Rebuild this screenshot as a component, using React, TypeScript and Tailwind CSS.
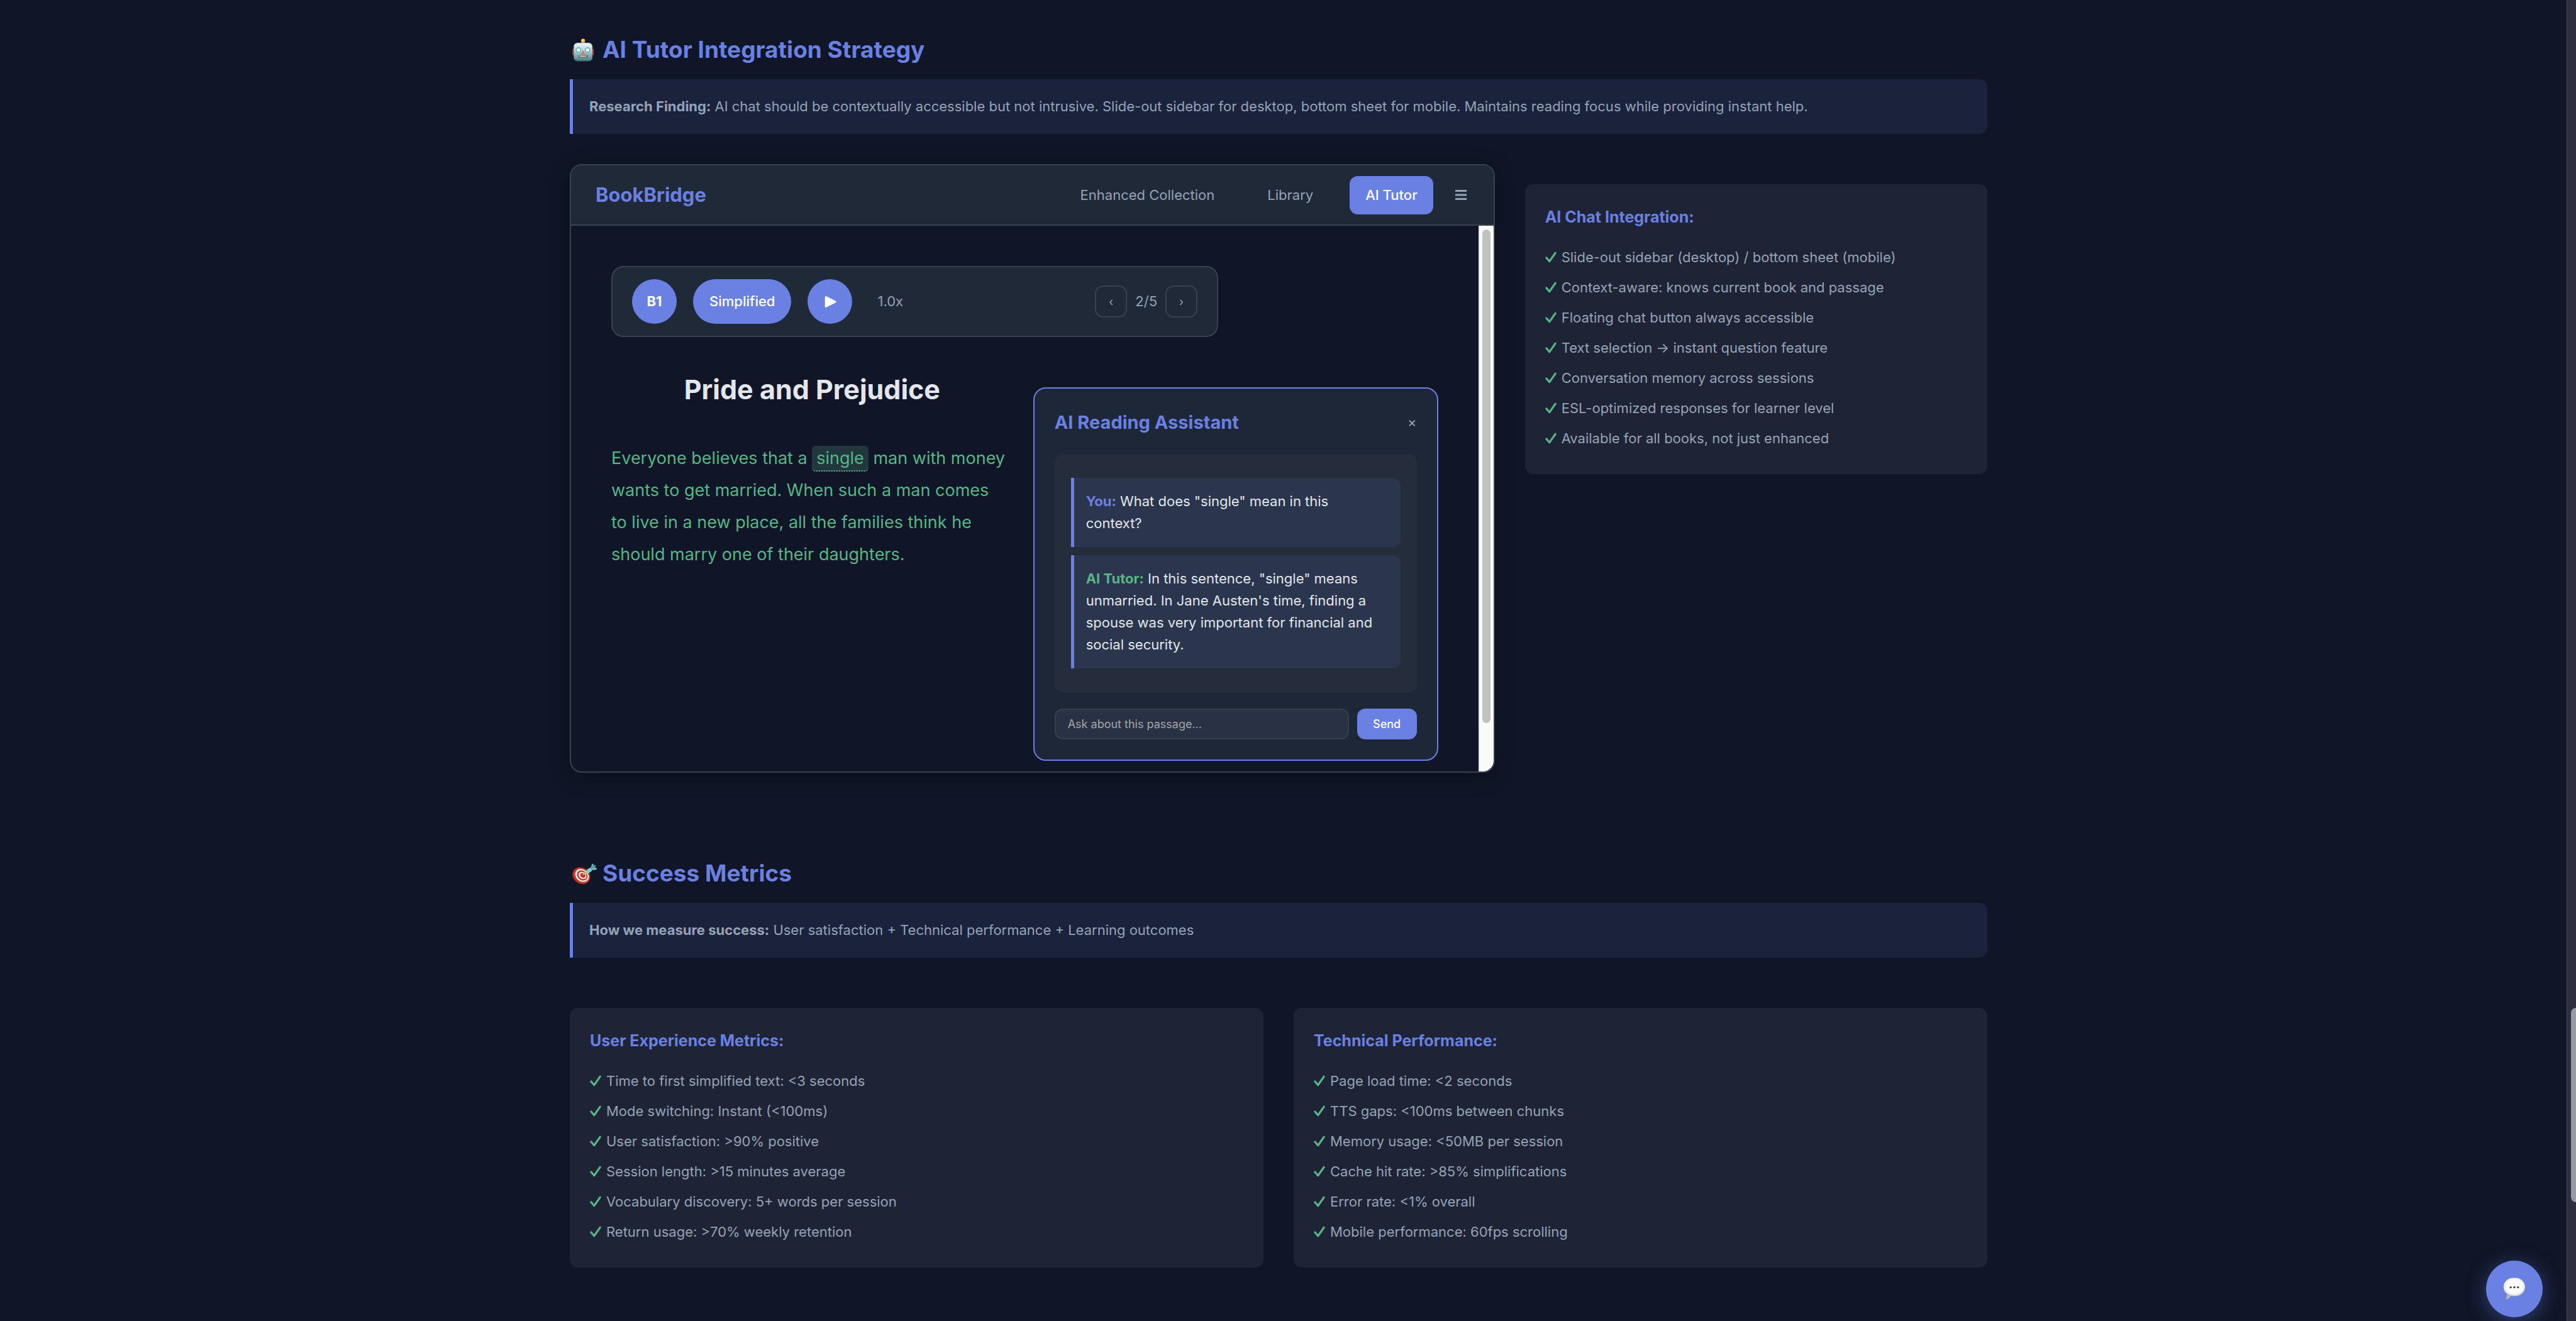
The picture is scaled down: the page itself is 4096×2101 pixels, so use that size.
import React from "react";

function RobotIcon() {
  return (
    <svg viewBox="33 40 130 138" className="h-[37px] w-[35px]" aria-hidden="true">
      <defs>
        <linearGradient id="robotFace" x1="0" y1="0" x2="0" y2="1">
          <stop offset="0" stopColor="#e9f5f3" />
          <stop offset="0.45" stopColor="#b9d3d3" />
          <stop offset="1" stopColor="#4f8089" />
        </linearGradient>
        <radialGradient id="robotBulb" cx="0.45" cy="0.4" r="0.6">
          <stop offset="0" stopColor="#ffe58a" />
          <stop offset="1" stopColor="#ee9a2e" />
        </radialGradient>
      </defs>
      <rect x="34" y="101" width="12" height="40" rx="5" fill="#b83a38" />
      <rect x="148" y="101" width="12" height="40" rx="5" fill="#b83a38" />
      <ellipse cx="96.500" cy="69" rx="15" ry="8" fill="#6a5280" />
      <circle cx="96.500" cy="54" r="12" fill="url(#robotBulb)" />
      <rect x="40" y="67" width="113" height="109" rx="22" fill="#3b6770" />
      <rect x="42" y="67" width="109" height="104" rx="21" fill="url(#robotFace)" />
      <circle cx="69" cy="109" r="16" fill="#4ba7cb" />
      <circle cx="69" cy="109" r="10.500" fill="#fff" />
      <circle cx="123" cy="109" r="16" fill="#4ba7cb" />
      <circle cx="123" cy="109" r="10.500" fill="#fff" />
      <path d="M96.500 109 L107 132 H86 Z" fill="#df6a5d" />
      <rect x="71" y="139" width="51" height="15" rx="5" fill="#3d3b3c" />
      <path d="M76 141h7v10h-7zM87 141h7v11h-7zM98 141h7v11h-7zM109 141h7v10h-7z" fill="#f6f1e4" />
    </svg>
  );
}

function TargetIcon() {
  return (
    <svg viewBox="22 34 148 128" className="h-[35px] w-[40px]" aria-hidden="true">
      <g transform="rotate(38 76 110)">
        <ellipse cx="74" cy="113" rx="54" ry="46" fill="#86201c" />
        <ellipse cx="76" cy="109" rx="54" ry="45" fill="#c2352c" />
        <ellipse cx="78" cy="107" rx="43" ry="35" fill="#f7efec" />
        <ellipse cx="79" cy="106" rx="34" ry="27" fill="#c2352c" />
        <ellipse cx="80" cy="105" rx="25" ry="20" fill="#f7efec" />
        <ellipse cx="81" cy="104" rx="16" ry="13" fill="#c2352c" />
      </g>
      <path d="M83 104 L104 88" stroke="#e3b53c" strokeWidth="6" strokeLinecap="round" />
      <path d="M96 86 L104 98" stroke="#e3b53c" strokeWidth="5" strokeLinecap="round" />
      <path d="M101 88 C104 76 118 65 132 63 L140 74 C136 86 120 97 107 97 Z" fill="#7fc9d4" />
      <path d="M130 66 L138 40 C144 37 149 44 147 53 L155 46 C160 46 160 51 157 56 L152 61 C160 60 168 66 167 71 C160 78 149 78 138 76 Z" fill="#6bb5c1" />
      <path d="M132 70 L154 50" stroke="#3d8291" strokeWidth="4" />
    </svg>
  );
}

function SpeechIcon() {
  return (
    <svg viewBox="129 132 134 136" className="h-9 w-9" aria-hidden="true">
      <defs>
        <radialGradient id="speechFill" cx="0.5" cy="0.46" r="0.56">
          <stop offset="0.6" stopColor="#ffffff" />
          <stop offset="0.85" stopColor="#ececec" />
          <stop offset="1" stopColor="#a9a9ab" />
        </radialGradient>
      </defs>
      <path d="M152 232 C153 246 148 256 141 263 C156 263 169 254 177 240 Z" fill="#b9b9bc" />
      <rect x="131" y="134" width="129" height="109" rx="56" fill="url(#speechFill)" />
      <circle cx="174" cy="190" r="6" fill="#3a3a3c" />
      <circle cx="196" cy="190" r="6" fill="#3a3a3c" />
      <circle cx="218" cy="190" r="6" fill="#3a3a3c" />
    </svg>
  );
}

function Check() {
  return (
    <svg viewBox="40 51 66 65" className="h-[18px] w-[18px]" fill="none" aria-hidden="true">
      <path d="M47 87 L65 108 L99 59" stroke="#57b586" strokeWidth="12" strokeLinecap="round" strokeLinejoin="round" />
    </svg>
  );
}

function SectionTitle({ icon, children }: { icon: React.ReactNode; children: React.ReactNode }) {
  return (
    <h2 className="mb-4 flex h-[62px] items-center text-[37px] font-bold text-[#6a80e3]">
      <span className="flex w-[52px] items-center pl-1">{icon}</span>
      {children}
    </h2>
  );
}

function Finding({ label, children }: { label: string; children: React.ReactNode }) {
  return (
    <p className="flex h-[87px] items-center rounded-r-[13px] border-l-[5px] border-[#6a80e3] bg-[#1b223b] px-[26px] text-[22px]">
      <span>
        <strong className="font-bold">{label}</strong> {children}
      </span>
    </p>
  );
}

function ListCard({ title, items }: { title: string; items: string[] }) {
  return (
    <section className="mt-8 rounded-[13px] bg-[#1e2435] px-8 pt-8 pb-[33px]">
      <h3 className="mb-5 text-[25px] leading-[40px] font-bold text-[#6a80e3]">{title}</h3>
      <ul>
        {items.map((item) => (
          <li key={item} className="flex h-12 items-center gap-2 text-[22px]">
            <Check />
            {item}
          </li>
        ))}
      </ul>
    </section>
  );
}

function Message({ who, tone, children }: { who: string; tone: string; children: React.ReactNode }) {
  return (
    <p className="rounded-r-[13px] border-l-[5px] border-[#6a80e3] bg-[#2c354e] py-5 pr-7 pl-[19px] text-[22px] leading-[35px] text-[#e2e7ee]">
      <strong className={tone}>{who}</strong> {children}
    </p>
  );
}

function AppHeader() {
  return (
    <header className="flex h-[96px] items-center justify-between border-b-2 border-[#38424f] bg-[#202938] px-[39px]">
      <a href="#home" className="text-[31px] font-bold text-[#6a80e3]">BookBridge</a>
      <nav className="flex items-center gap-8 text-[22px]">
        <a href="#enhanced" className="px-[26px]">Enhanced Collection</a>
        <a href="#library" className="px-[26px]">Library</a>
        <a href="#tutor" className="flex h-[61px] items-center rounded-[13px] bg-[#6a80e3] px-[25px] font-medium text-white">
          AI Tutor
        </a>
        <button type="button" aria-label="Menu" className="flex w-[25px] justify-center">
          <svg viewBox="0 0 18 16" className="h-4 w-[18px]" aria-hidden="true">
            <path d="M0 0h18v3H0zM0 6.500h18v3H0zM0 13h18v3H0z" fill="#96a3b6" />
          </svg>
        </button>
      </nav>
    </header>
  );
}

function ReaderToolbar() {
  const pager = "flex size-[51px] items-center justify-center rounded-[13px] border-2 border-[#38424f] text-[18px]";
  return (
    <div className="flex h-[113px] max-w-[965px] items-center gap-[26px] rounded-[19px] border-2 border-[#38424f] bg-[#202938] px-[31px] text-[22px]">
      <button type="button" className="size-[71px] rounded-full bg-[#6a80e3] text-[22px] font-bold text-white">B1</button>
      <button type="button" className="h-[71px] rounded-full bg-[#6a80e3] px-[26px] text-[22px] font-medium text-white">Simplified</button>
      <button type="button" aria-label="Play" className="flex size-[71px] items-center justify-center rounded-full bg-[#6a80e3]">
        <svg viewBox="0 0 18 18" className="size-[20px]" aria-hidden="true">
          <path d="M3 2.500 L16 9 L3 15.500 Z" fill="#fff" stroke="#fff" strokeWidth="3" strokeLinejoin="round" />
        </svg>
      </button>
      <span className="px-[14px]">1.0x</span>
      <div className="ml-auto flex items-center gap-[13px]">
        <button type="button" aria-label="Previous page" className={pager}>‹</button>
        <span>2/5</span>
        <button type="button" aria-label="Next page" className={pager}>›</button>
      </div>
    </div>
  );
}

function Article() {
  return (
    <article>
      <h1 className="mb-12 text-center text-[43px] leading-[72px] font-bold text-[#e2e7ee]">Pride and Prejudice</h1>
      <p className="text-[27px] leading-[51px] whitespace-nowrap text-[#57b586]">
        Everyone believes that a{" "}
        <mark className="rounded-md border-b-2 border-dotted border-[#57b586] bg-[#20373e] px-[7px] py-[3px] text-[#57b586]">single</mark>{" "}
        man with money
        <br />
        wants to get married. When such a man comes
        <br />
        to live in a new place, all the families think he
        <br />
        should marry one of their daughters.
      </p>
    </article>
  );
}

function Assistant() {
  return (
    <aside className="mt-[33px] rounded-[20px] border-2 border-[#6a80e3] bg-[#1e2737] p-8">
      <div className="mb-[29px] flex h-[43px] items-center justify-between">
        <h2 className="text-[29px] font-bold text-[#6a80e3]">AI Reading Assistant</h2>
        <button type="button" aria-label="Close" className="text-[22px]">×</button>
      </div>
      <div className="flex flex-col gap-[13px] rounded-[13px] bg-[#252d3d] px-[26px] py-[38px]">
        <Message who="You:" tone="font-bold text-[#6a80e3]">What does "single" mean in this context?</Message>
        <Message who="AI Tutor:" tone="font-bold text-[#57b586]">
          In this sentence, "single" means unmarried. In Jane Austen's time, finding a spouse was very important for
          financial and social security.
        </Message>
      </div>
      <form className="mt-[26px] flex h-[49px] gap-[13px]" onSubmit={(e) => e.preventDefault()}>
        <input
          type="text"
          aria-label="Ask about this passage"
          placeholder="Ask about this passage..."
          className="min-w-0 flex-1 rounded-[13px] border-2 border-[#353f50] bg-[#293144] px-[19px] text-[18px] text-[#e2e7ee] placeholder:text-[#a3a5a8]"
        />
        <button type="submit" className="w-[95px] rounded-[13px] bg-[#6a80e3] text-[18px] font-medium text-white">Send</button>
      </form>
    </aside>
  );
}

export default function App() {
  return (
    <div className="flex min-h-screen bg-[#101627] font-['Inter',sans-serif] text-[#96a3b6]">
      <main className="flex-1 pt-12 pr-[15px] pb-12">
        <div className="mx-auto max-w-[2254px]">
          <SectionTitle icon={<RobotIcon />}>AI Tutor Integration Strategy</SectionTitle>
          <Finding label="Research Finding:">
            AI chat should be contextually accessible but not intrusive. Slide-out sidebar for desktop, bottom sheet for
            mobile. Maintains reading focus while providing instant help.
          </Finding>

          <div className="mt-12 grid grid-cols-[2fr_1fr] items-start gap-12">
            <div className="overflow-hidden rounded-[19px] border-2 border-[#38424f] shadow-[0_6px_32px_rgba(0,0,0,0.3)]">
              <AppHeader />
              <div className="flex">
                <div className="flex-1 px-16 pt-16 pb-[17px]">
                  <ReaderToolbar />
                  <div className="mt-[47px] grid grid-cols-[1fr_644px] items-start gap-8">
                    <Article />
                    <Assistant />
                  </div>
                </div>
                <div className="w-6 border-l-2 border-[#e8e8e8] bg-[#fafafa] pt-[6px] pl-1">
                  <div className="h-[785px] w-[13px] rounded-full bg-[#c1c1c1]" />
                </div>
              </div>
            </div>
            <ListCard
              title="AI Chat Integration:"
              items={[
                "Slide-out sidebar (desktop) / bottom sheet (mobile)",
                "Context-aware: knows current book and passage",
                "Floating chat button always accessible",
                "Text selection → instant question feature",
                "Conversation memory across sessions",
                "ESL-optimized responses for learner level",
                "Available for all books, not just enhanced",
              ]}
            />
          </div>

          <div className="mt-[129px]">
            <SectionTitle icon={<TargetIcon />}>Success Metrics</SectionTitle>
            <Finding label="How we measure success:">
              User satisfaction + Technical performance + Learning outcomes
            </Finding>
            <div className="mt-12 grid grid-cols-2 gap-12">
              <ListCard
                title="User Experience Metrics:"
                items={[
                  "Time to first simplified text: <3 seconds",
                  "Mode switching: Instant (<100ms)",
                  "User satisfaction: >90% positive",
                  "Session length: >15 minutes average",
                  "Vocabulary discovery: 5+ words per session",
                  "Return usage: >70% weekly retention",
                ]}
              />
              <ListCard
                title="Technical Performance:"
                items={[
                  "Page load time: <2 seconds",
                  "TTS gaps: <100ms between chunks",
                  "Memory usage: <50MB per session",
                  "Cache hit rate: >85% simplifications",
                  "Error rate: <1% overall",
                  "Mobile performance: 60fps scrolling",
                ]}
              />
            </div>
          </div>
        </div>
      </main>

      <div className="w-[15px] overflow-hidden border-l border-[#4a4b57] bg-[#2d2e3e] pt-[1603px] pl-[6px]">
        <div className="h-[309px] w-4 rounded-l-[8px] bg-[#9999a3]" />
      </div>

      <button
        type="button"
        aria-label="Open chat"
        className="fixed right-[53px] bottom-[6px] flex size-[90px] items-center justify-center rounded-full bg-[#6a80e3] shadow-[0_6px_32px_rgba(102,126,234,0.4)]"
      >
        <SpeechIcon />
      </button>
    </div>
  );
}
